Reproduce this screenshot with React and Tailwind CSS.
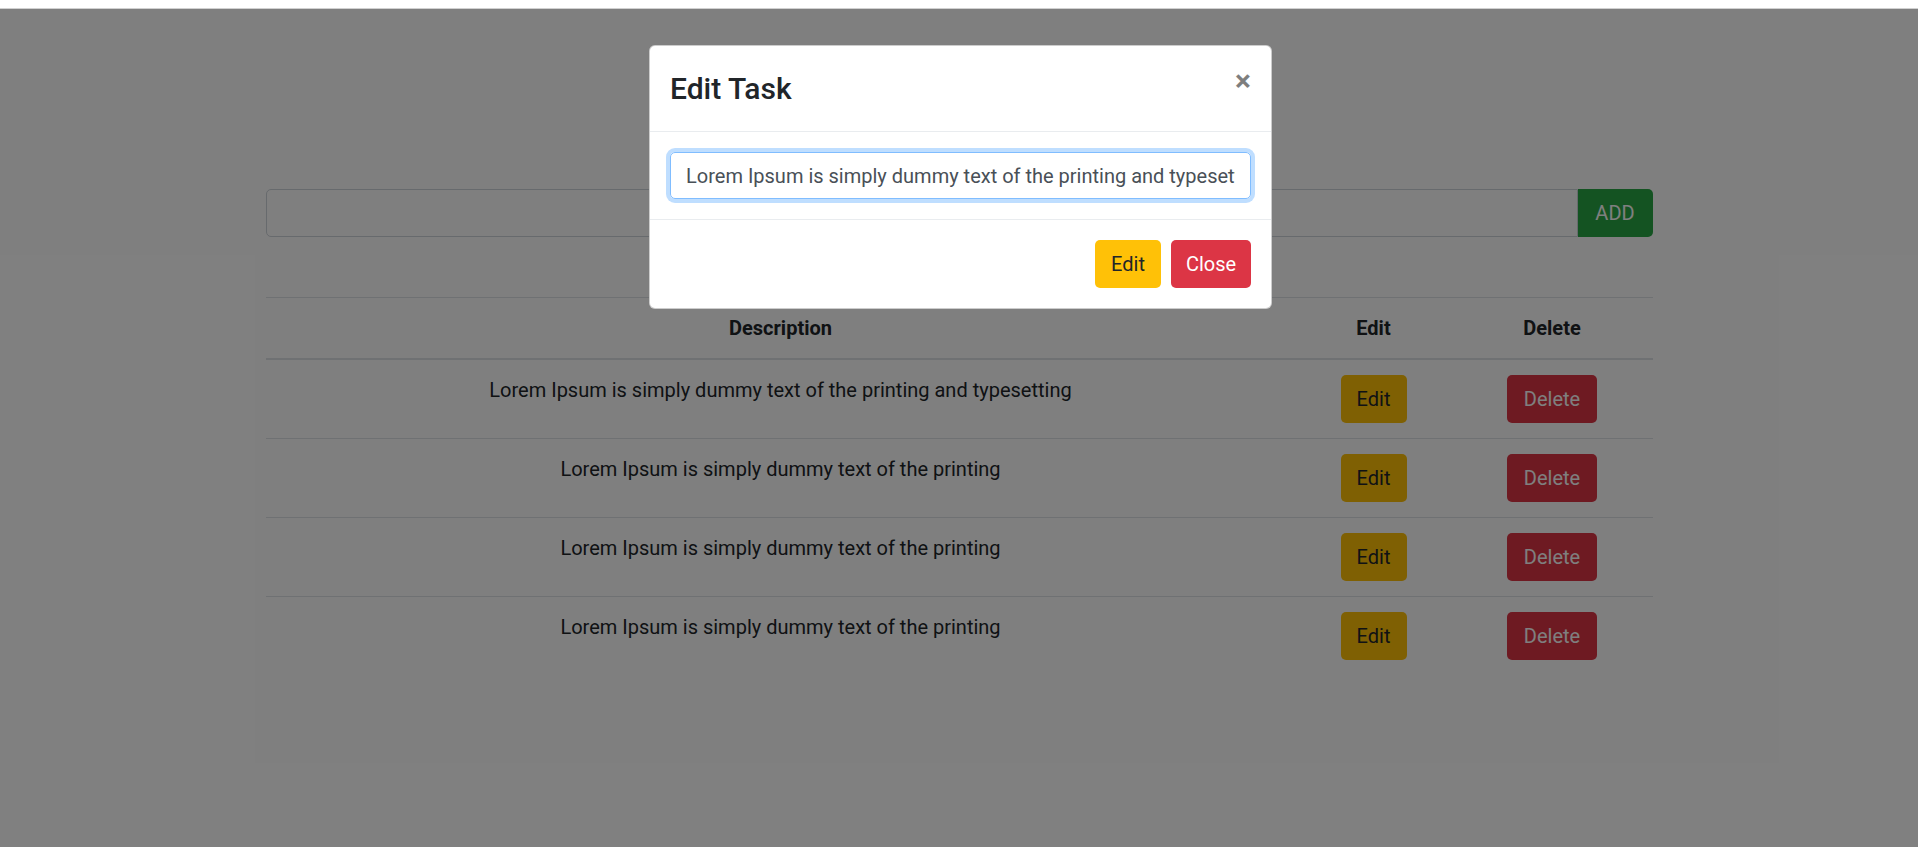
import React from "react";

const FONT = { fontFamily: 'Roboto, "Noto Sans", Arial, sans-serif' };
const rows = [
  "Lorem Ipsum is simply dummy text of the printing and typesetting",
  "Lorem Ipsum is simply dummy text of the printing",
  "Lorem Ipsum is simply dummy text of the printing",
  "Lorem Ipsum is simply dummy text of the printing",
];

export default function App() {
  return (
    <div className="relative w-full h-[847px] overflow-hidden bg-white text-[#212529]" style={FONT}>
      <div className="h-[9px] bg-white border-b border-[#d0d0d0]" />
      <div className="relative h-[838px]">
        <div className="w-[1387px] mx-auto pt-[180px]">
          <div className="flex h-[48px]">
            <input className="flex-1 h-full border border-[#ced4da] rounded-l-[5px] px-[15px] text-[20px] outline-none bg-white" />
            <button className="w-[75px] h-full bg-[#28a745] text-white text-[20px] rounded-r-[5px]">ADD</button>
          </div>
          <div className="mt-[60px] border-t border-[#dee2e6]">
            <div className="grid grid-cols-[1030px_156px_201px] border-b-2 border-[#dee2e6] text-[20px] font-bold leading-[30px] text-center">
              <div className="py-[15px]">Description</div>
              <div className="py-[15px]">Edit</div>
              <div className="py-[15px]">Delete</div>
            </div>
            {rows.map((r, i) => (
              <div key={i} className={`grid grid-cols-[1030px_156px_201px] text-[20px] leading-[30px] text-center ${i > 0 ? "border-t border-[#dee2e6]" : ""}`}>
                <div className="py-[15px]">{r}</div>
                <div className="py-[15px] flex justify-center">
                  <button className="h-[48px] w-[66px] rounded-[5px] bg-[#ffc107] text-[#212529]">Edit</button>
                </div>
                <div className="py-[15px] flex justify-center">
                  <button className="h-[48px] w-[90px] rounded-[5px] bg-[#dc3545] text-white">Delete</button>
                </div>
              </div>
            ))}
          </div>
        </div>
        <div className="absolute inset-0 bg-black/50" />
        <div className="absolute left-[649px] top-[36px] w-[623px] bg-white border border-black/20 rounded-[6px]">
          <div className="flex items-start justify-between p-[20px] border-b border-[#e9ecef]">
            <h4 className="text-[30px] leading-[45px] font-medium">Edit Task</h4>
            <button className="-m-[20px] p-[20px] text-[30px] leading-[30px] font-bold text-black opacity-50">×</button>
          </div>
          <div className="p-[20px]">
            <input
              readOnly
              value="Lorem Ipsum is simply dummy text of the printing and typesetting"
              className="w-full h-[47px] border border-[#80bdff] rounded-[5px] px-[15px] text-[20px] text-[#495057] outline-none shadow-[0_0_0_4px_rgba(0,123,255,0.25)]"
            />
          </div>
          <div className="flex justify-end gap-[10px] px-[20px] py-[20px] border-t border-[#e9ecef]">
            <button className="h-[48px] w-[66px] rounded-[5px] bg-[#ffc107] text-[#212529] text-[20px]">Edit</button>
            <button className="h-[48px] w-[80px] rounded-[5px] bg-[#dc3545] text-white text-[20px]">Close</button>
          </div>
        </div>
      </div>
    </div>
  );
}
